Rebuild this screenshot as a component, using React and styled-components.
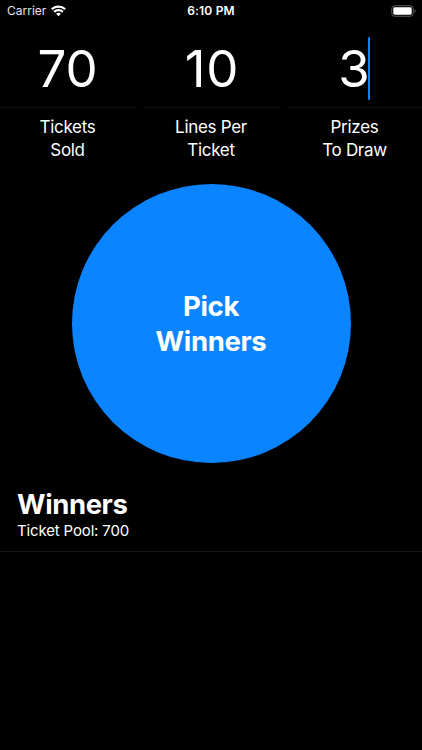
import React from 'react';
import styled, { createGlobalStyle } from 'styled-components';

const GlobalStyle = createGlobalStyle`
  * {
    box-sizing: border-box;
  }

  body {
    margin: 0;
    background: #000;
  }
`;

const Screen = styled.main`
  width: 422px;
  height: 750px;
  overflow: hidden;
  background: #000;
  color: #fff;
  font-family: Inter, 'Liberation Sans', sans-serif;
`;

const StatusBar = styled.header`
  display: grid;
  grid-template-columns: 1fr auto 1fr;
  align-items: center;
  height: 22px;
  padding: 0 7px 0 7px;
  font-size: 12px;
  line-height: 22px;
`;

const Carrier = styled.div`
  display: flex;
  align-items: center;
  gap: 5px;
  color: #e6e6e6;
`;

const Clock = styled.time`
  font-weight: 600;
  letter-spacing: 0.2px;
`;

const Battery = styled.div`
  display: flex;
  justify-content: flex-end;
  margin-right: -2px;
`;

const Fields = styled.section`
  display: grid;
  grid-template-columns: repeat(3, 1fr);
  column-gap: 8.5px;
  padding-top: 8px;
`;

const Field = styled.div`
  text-align: center;
`;

const Value = styled.div`
  height: 78px;
  border-bottom: 1px solid #121214;
  font-size: 51px;
  line-height: 78px;
  letter-spacing: ${({ $tracking }) => $tracking || '0'};
  text-indent: ${({ $indent }) => $indent || '0'};
`;

const Digits = styled.span`
  position: relative;
`;

const Caret = styled.span`
  position: absolute;
  top: -1px;
  right: -1px;
  width: 2px;
  height: 63px;
  border-radius: 1px;
  background: #0a84ff;
`;

const Label = styled.div`
  padding-top: 8px;
  font-size: 17px;
  line-height: 22.5px;
  white-space: pre-line;
  letter-spacing: -0.3px;
`;

const PickButton = styled.button`
  display: flex;
  align-items: center;
  justify-content: center;
  width: 279px;
  height: 279px;
  margin: 23px auto 0;
  padding: 0;
  border: 0;
  border-radius: 50%;
  background: #0a84ff;
  color: #fff;
  font-family: inherit;
  font-size: 27.5px;
  font-weight: 700;
  line-height: 34.5px;
  letter-spacing: -0.35px;
  white-space: pre-line;
`;

const Results = styled.section`
  margin-top: 24px;
  padding: 0 17px 10px;
  border-bottom: 1px solid #161618;
`;

const Title = styled.h2`
  margin: 0;
  font-size: 27.5px;
  font-weight: 700;
  line-height: 34px;
  letter-spacing: -0.4px;
`;

const Pool = styled.p`
  margin: 0;
  font-size: 15px;
  line-height: 20px;
  letter-spacing: -0.15px;
`;

const fields = [
  { value: '70', label: 'Tickets\nSold' },
  { value: '10', label: 'Lines Per\nTicket', tracking: '0.8px', indent: '2px' },
  { value: '3', label: 'Prizes\nTo Draw', tracking: '-1px', indent: '-2px', focused: true },
];

const WifiIcon = () => (
  <svg width="15" height="12" viewBox="0 0 15 12" fill="none" stroke="#fff" strokeWidth="2.2">
    <path d="M0.8 4.3C4.4 0.7 10.6 0.7 14.2 4.3" />
    <path d="M3.2 6.9C5.6 4.6 9.4 4.6 11.8 6.9" />
    <path d="M5.1 8.8C6.5 7.5 8.5 7.5 9.9 8.8L7.5 11.2Z" fill="#fff" stroke="none" />
  </svg>
);

const BatteryIcon = () => (
  <svg width="26" height="12" viewBox="0 0 26 12" fill="none">
    <rect x="0.75" y="0.75" width="21.5" height="10.5" rx="2.8" stroke="#5c5c5c" />
    <rect x="2.3" y="2.3" width="18.4" height="7.4" rx="1.4" fill="#fff" />
    <path d="M23.7 4.2C25 4.7 25 7.3 23.7 7.8Z" fill="#666" />
  </svg>
);

const App = () => {
  return (
    <Screen>
      <GlobalStyle />
      <StatusBar>
        <Carrier>
          Carrier
          <WifiIcon />
        </Carrier>
        <Clock>6:10 PM</Clock>
        <Battery>
          <BatteryIcon />
        </Battery>
      </StatusBar>

      <Fields>
        {fields.map(({ value, label, tracking, indent, focused }) => (
          <Field key={label}>
            <Value $tracking={tracking} $indent={indent}>
              <Digits>
                {value}
                {focused && <Caret />}
              </Digits>
            </Value>
            <Label>{label}</Label>
          </Field>
        ))}
      </Fields>

      <PickButton type="button">{'Pick\nWinners'}</PickButton>

      <Results>
        <Title>Winners</Title>
        <Pool>Ticket Pool: 700</Pool>
      </Results>
    </Screen>
  );
};

export default App;
